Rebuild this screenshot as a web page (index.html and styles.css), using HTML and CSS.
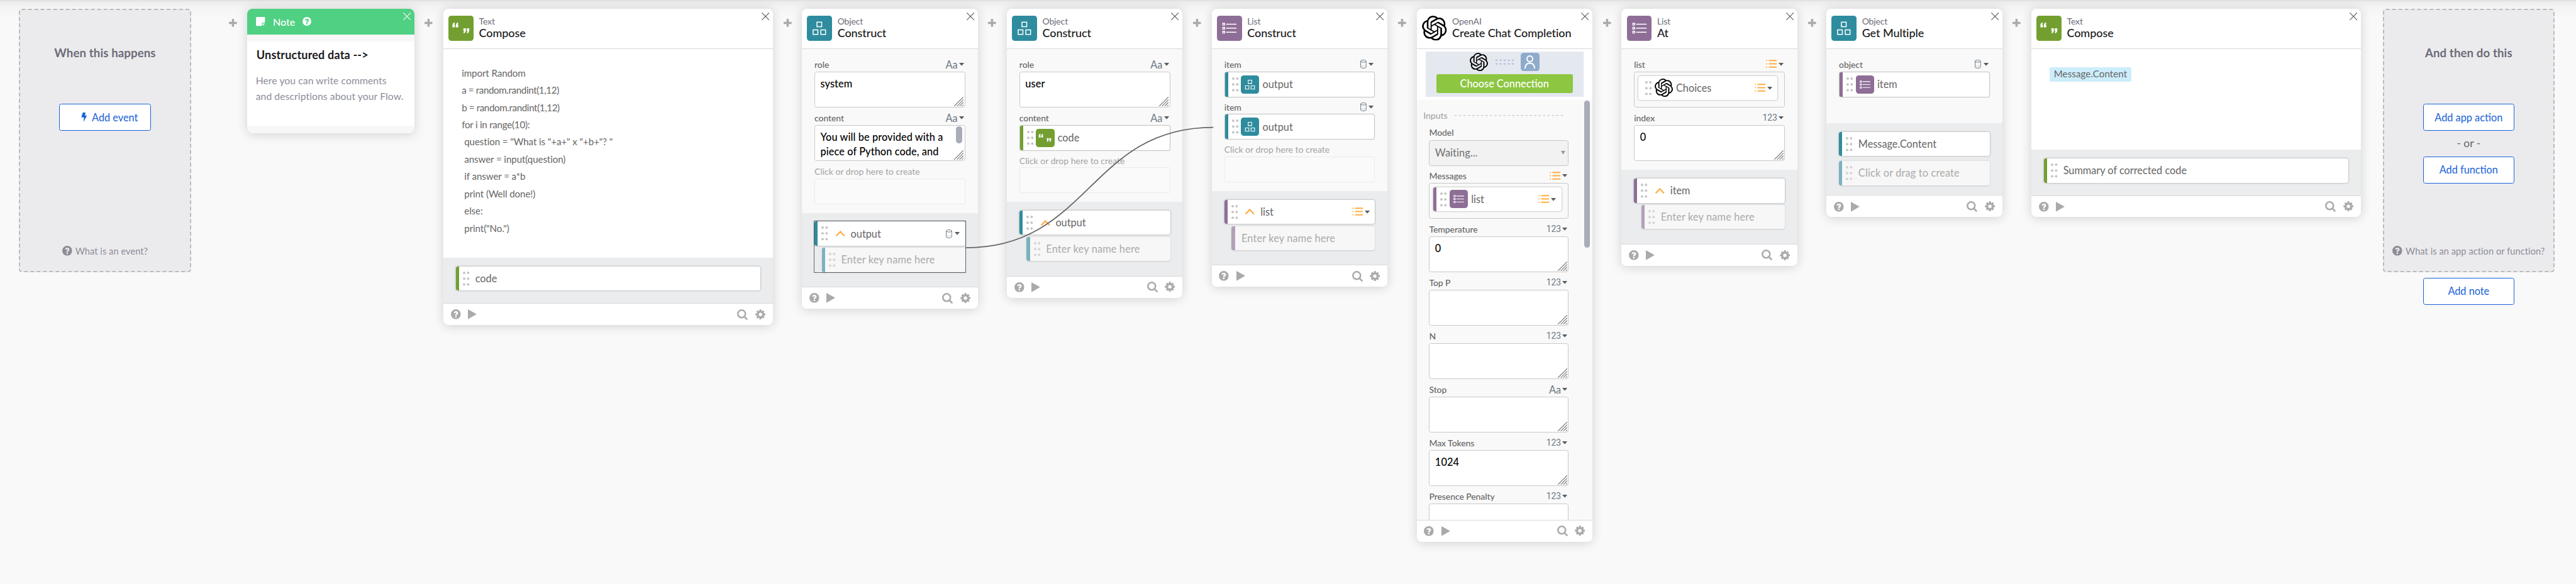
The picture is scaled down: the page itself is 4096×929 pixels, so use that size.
FILE: index.html
```html
<!DOCTYPE html>
<html lang="en">
<head>
<meta charset="utf-8">
<title>Flow editor</title>
<link rel="stylesheet" href="styles.css">
</head>
<body>
<svg class="defs" aria-hidden="true">
  <symbol id="plus" viewBox="0 0 22 22"><path d="M8 0h6v8h8v6h-8v8H8v-8H0V8h8z"/></symbol>
  <symbol id="close" viewBox="0 0 21 21"><path d="M.5.5l20 20M20.5.5l-20 20" fill="none" stroke="currentColor" stroke-width="1.8"/></symbol>
  <symbol id="help" viewBox="0 0 27 27"><path fill-rule="evenodd" d="M13.5 0a13.5 13.5 0 1 1 0 27a13.5 13.5 0 0 1 0-27zM11.4 18.5v4h4.2v-4zM7.5 9.2l3.6 1.8c.5-1.2 1.2-1.9 2.5-1.9 1.1 0 1.8.5 1.8 1.4 0 1.9-4 2.3-3.9 6.3h4c-.1-2.2 4.2-2.7 4.2-6.5 0-3-2.6-5.1-6-5.1-3 0-5.2 1.5-6.2 4z"/></symbol>
  <symbol id="play" viewBox="0 0 24 27"><path d="M0 0l24 13.5L0 27z"/></symbol>
  <symbol id="search" viewBox="0 0 29 29"><circle cx="12.5" cy="12.5" r="10.3" fill="none" stroke="currentColor" stroke-width="4.3"/><path d="M20 20l7 7" stroke="currentColor" stroke-width="4.6" stroke-linecap="round"/></symbol>
  <symbol id="gear" viewBox="-14 -14 28 28"><circle r="7.5" fill="none" stroke="currentColor" stroke-width="5.6"/><path d="M0-13.5v5M0 13.5v-5M-13.5 0h5M13.5 0h-5M-9.3-9.3L-6-6M9.3 9.3L6 6M-9.3 9.3L-6 6M9.3-9.3L6-6" stroke="currentColor" stroke-width="5.6"/></symbol>
  <symbol id="quotes" viewBox="0 0 68 68"><path d="M11 32v-6.5c0-2.5 2-5 3.7-6.8h3.300l-2.300 5.800h2V32zM20.300 32v-6.500c0-2.500 2-5 3.700-6.800h3.300L25 24.500h2V32zM57 34.500V41c0 2.500-2 5-3.700 6.800H50l2.300-5.800h-2v-7.500zM47.700 34.500V41c0 2.500-2 5-3.700 6.800h-3.300L43 42h-2v-7.500z"/></symbol>
  <symbol id="boxes" viewBox="0 0 68 68"><path d="M27.5 17.5h13V30h-13zM17 38.5h13V51H17zM38 38.5h13V51H38z" fill="none" stroke="currentColor" stroke-width="2.6"/></symbol>
  <symbol id="rows" viewBox="0 0 68 68"><path d="M16 20.500h5v5h-5zM16 31.500h5v5h-5zM16 42.500h5v5h-5z" fill="none" stroke="currentColor" stroke-width="2.4"/><path d="M25 23h28.500M25 34h28.500M25 45h28.500" stroke="currentColor" stroke-width="2.6"/></symbol>
  <symbol id="openai" viewBox="0 0 24 24"><path d="M22.2819 9.8211a5.9847 5.9847 0 0 0-.5157-4.9108 6.0462 6.0462 0 0 0-6.5098-2.9A6.0651 6.0651 0 0 0 4.9807 4.1818a5.9847 5.9847 0 0 0-3.9977 2.9 6.0462 6.0462 0 0 0 .7427 7.0966 5.98 5.98 0 0 0 .511 4.9107 6.051 6.051 0 0 0 6.5146 2.9001A5.9847 5.9847 0 0 0 13.2599 24a6.0557 6.0557 0 0 0 5.7718-4.2058 5.9894 5.9894 0 0 0 3.9977-2.9001 6.0557 6.0557 0 0 0-.7475-7.0729zm-9.022 12.6081a4.4755 4.4755 0 0 1-2.8764-1.0408l.1419-.0804 4.7783-2.7582a.7948.7948 0 0 0 .3927-.6813v-6.7369l2.02 1.1686a.071.071 0 0 1 .038.052v5.5826a4.504 4.504 0 0 1-4.4945 4.4944zm-9.6607-4.1254a4.4708 4.4708 0 0 1-.5346-3.0137l.142.0852 4.783 2.7582a.7712.7712 0 0 0 .7806 0l5.8428-3.3685v2.3324a.0804.0804 0 0 1-.0332.0615L9.74 19.9502a4.4992 4.4992 0 0 1-6.1408-1.6464zM2.3408 7.8956a4.485 4.485 0 0 1 2.3655-1.9728V11.6a.7664.7664 0 0 0 .3879.6765l5.8144 3.3543-2.0201 1.1685a.0757.0757 0 0 1-.071 0l-4.8303-2.7865A4.504 4.504 0 0 1 2.3408 7.872zm16.5963 3.8558L13.1038 8.364 15.1192 7.2a.0757.0757 0 0 1 .071 0l4.8303 2.7913a4.4944 4.4944 0 0 1-.6765 8.1042v-5.6772a.79.79 0 0 0-.407-.667zm2.0107-3.0231l-.142-.0852-4.7735-2.7818a.7759.7759 0 0 0-.7854 0L9.409 9.2297V6.8974a.0662.0662 0 0 1 .0284-.0615l4.8303-2.7866a4.4992 4.4992 0 0 1 6.6802 4.66zM8.3065 12.863l-2.02-1.1638a.0804.0804 0 0 1-.038-.0567V6.0742a4.4992 4.4992 0 0 1 7.3757-3.4537l-.142.0805L8.704 5.459a.7948.7948 0 0 0-.3927.6813zm1.0976-2.3654l2.602-1.4998 2.6069 1.4998v2.9994l-2.5974 1.4997-2.6067-1.4997Z"/></symbol>
  <symbol id="user" viewBox="0 0 50 50"><g fill="none" stroke="currentColor" stroke-width="3.4"><circle cx="25" cy="16.5" r="7.8"/><path d="M12 43c.5-9.500 5.500-14.500 13-14.500S37.500 33.500 38 43"/></g></symbol>
  <symbol id="dots" viewBox="0 0 18 39"><circle cx="3.4" cy="3.4" r="3.4"/><circle cx="14.4" cy="3.4" r="3.4"/><circle cx="3.4" cy="19.4" r="3.4"/><circle cx="14.4" cy="19.4" r="3.4"/><circle cx="3.4" cy="35.4" r="3.4"/><circle cx="14.4" cy="35.4" r="3.4"/></symbol>
  <symbol id="chevron" viewBox="0 0 25 16"><path d="M1 14.500L12.500 2.500 24 14.500" fill="none" stroke="currentColor" stroke-width="3.8"/></symbol>
  <symbol id="caret" viewBox="0 0 14 8"><path d="M0 0h14L7 8z"/></symbol>
  <symbol id="lines" viewBox="0 0 30 23"><path d="M9 2.200h19.500M9 11.300h19.500M9 20.400h19.500M2 2.200h.1M2 11.300h.1M2 20.400h.1" fill="none" stroke="currentColor" stroke-width="3.4" stroke-linecap="round"/></symbol>
  <symbol id="db" viewBox="0 0 17 24"><path d="M1 4v16M16 4v16M1 4c0-4 15-4 15 0s-15 4-15 0M1 20c0 4 15 4 15 0" fill="none" stroke="currentColor" stroke-width="1.7"/><path d="M2 19c1-2.500 12-2.500 13 0" fill="none" stroke="currentColor" stroke-width="1" stroke-dasharray="2 1.5"/></symbol>
  <symbol id="grip" viewBox="0 0 26 26"><path d="M.5 25.500l25-25M8 25.500L25.500 8M15 25.500L25.500 15M22 25.500l3.500-3.500" stroke="currentColor" stroke-width="2"/></symbol>
  <symbol id="bolt" viewBox="0 0 16 26"><path d="M4.500 0H12l-1.500 8H16L6.500 26l1.300-12.500H.5z"/></symbol>
  <symbol id="note" viewBox="0 0 25 25"><path d="M2 0h21a2 2 0 0 1 2 2v13.500h-8.500V25H2a2 2 0 0 1-2-2V2a2 2 0 0 1 2-2zM18.500 24.500v-7h6.500z"/></symbol>
</svg>

<main class="flow">
  <section class="drop drop-first">
    <h2 class="drop-title">When this happens</h2>
    <button class="btn"><svg class="i-bolt"><use href="#bolt"/></svg>Add event</button>
    <p class="drop-help"><svg class="i-help"><use href="#help"/></svg>What is an event?</p>
  </section>

  <div class="gap"><svg class="i-plus"><use href="#plus"/></svg></div>
  <article class="note">
    <header class="note-head"><svg class="i-note"><use href="#note"/></svg><span class="note-label">Note</span><svg class="i-nhelp"><use href="#help"/></svg><svg class="close"><use href="#close"/></svg></header>
    <div class="note-body">
      <h3 class="note-title">Unstructured data --&gt;</h3>
      <p class="note-text">Here you can write comments<br>and descriptions about your Flow.</p>
    </div>
  </article>

  <div class="gap"><svg class="i-plus"><use href="#plus"/></svg></div>
  <article class="card wide green">
    <header class="head"><span class="tile"><svg><use href="#quotes"/></svg></span><div class="names"><span class="kind">Text</span><span class="name">Compose</span></div><svg class="close"><use href="#close"/></svg></header>
    <div class="doc tall">
      <p>import Random</p><p class="tight">a = random.randint(1,12)</p><p class="tight">b = random.randint(1,12)</p><p class="snug">for i in range(10):</p><p class="in">question = "What is "+a+" x "+b+"? "</p><p class="in">answer = input(question)</p><p class="in">if answer = a*b</p><p class="in">print (Well done!)</p><p class="in">else:</p><p class="in">print("No.")</p>
    </div>
    <div class="outs"><div class="pill"><svg class="i-dots"><use href="#dots"/></svg><span class="val">code</span></div></div>
    <footer class="foot"><svg class="i-help"><use href="#help"/></svg><svg class="i-play"><use href="#play"/></svg><svg class="i-search"><use href="#search"/></svg><svg class="i-gear"><use href="#gear"/></svg></footer>
  </article>

  <div class="gap"><svg class="i-plus"><use href="#plus"/></svg></div>
  <article class="card teal">
    <header class="head"><span class="tile"><svg><use href="#boxes"/></svg></span><div class="names"><span class="kind">Object</span><span class="name">Construct</span></div><svg class="close"><use href="#close"/></svg></header>
    <div class="ins">
      <div class="label">role<span class="type">Aa<svg class="i-caret"><use href="#caret"/></svg></span></div>
      <div class="area">system<svg class="i-grip"><use href="#grip"/></svg></div>
      <div class="label">content<span class="type">Aa<svg class="i-caret"><use href="#caret"/></svg></span></div>
      <div class="area">You will be provided with a<br>piece of Python code, and<span class="thumb"></span><svg class="i-grip"><use href="#grip"/></svg></div>
      <div class="label faint">Click or drop here to create</div>
      <div class="empty"></div>
    </div>
    <div class="outs">
      <div class="group picked">
        <div class="pill"><svg class="i-dots"><use href="#dots"/></svg><svg class="i-chev"><use href="#chevron"/></svg><span class="val">output</span><span class="type end"><svg class="i-db"><use href="#db"/></svg><svg class="i-caret"><use href="#caret"/></svg></span></div>
        <div class="pill sub"><svg class="i-dots"><use href="#dots"/></svg><span class="val">Enter key name here</span></div>
      </div>
    </div>
    <footer class="foot"><svg class="i-help"><use href="#help"/></svg><svg class="i-play"><use href="#play"/></svg><svg class="i-search"><use href="#search"/></svg><svg class="i-gear"><use href="#gear"/></svg></footer>
  </article>

  <div class="gap"><svg class="i-plus"><use href="#plus"/></svg></div>
  <article class="card teal">
    <header class="head"><span class="tile"><svg><use href="#boxes"/></svg></span><div class="names"><span class="kind">Object</span><span class="name">Construct</span></div><svg class="close"><use href="#close"/></svg></header>
    <div class="ins">
      <div class="label">role<span class="type">Aa<svg class="i-caret"><use href="#caret"/></svg></span></div>
      <div class="area">user<svg class="i-grip"><use href="#grip"/></svg></div>
      <div class="label">content<span class="type">Aa<svg class="i-caret"><use href="#caret"/></svg></span></div>
      <div class="slot green"><svg class="i-dots"><use href="#dots"/></svg><span class="tile small"><svg><use href="#quotes"/></svg></span><span class="val">code</span></div>
      <div class="label faint short">Click or drop here to create</div>
      <div class="empty"></div>
    </div>
    <div class="outs">
      <div class="group">
        <div class="pill"><svg class="i-dots"><use href="#dots"/></svg><svg class="i-chev"><use href="#chevron"/></svg><span class="val">output</span></div>
        <div class="pill sub"><svg class="i-dots"><use href="#dots"/></svg><span class="val">Enter key name here</span></div>
      </div>
    </div>
    <footer class="foot"><svg class="i-help"><use href="#help"/></svg><svg class="i-play"><use href="#play"/></svg><svg class="i-search"><use href="#search"/></svg><svg class="i-gear"><use href="#gear"/></svg></footer>
  </article>

  <div class="gap"><svg class="i-plus"><use href="#plus"/></svg></div>
  <article class="card purple">
    <header class="head"><span class="tile"><svg><use href="#rows"/></svg></span><div class="names"><span class="kind">List</span><span class="name">Construct</span></div><svg class="close"><use href="#close"/></svg></header>
    <div class="ins">
      <div class="label">item<span class="type"><svg class="i-db"><use href="#db"/></svg><svg class="i-caret"><use href="#caret"/></svg></span></div>
      <div class="slot teal"><svg class="i-dots"><use href="#dots"/></svg><span class="tile small"><svg><use href="#boxes"/></svg></span><span class="val">output</span></div>
      <div class="label short">item<span class="type"><svg class="i-db"><use href="#db"/></svg><svg class="i-caret"><use href="#caret"/></svg></span></div>
      <div class="slot teal"><svg class="i-dots"><use href="#dots"/></svg><span class="tile small"><svg><use href="#boxes"/></svg></span><span class="val">output</span></div>
      <div class="label faint short">Click or drop here to create</div>
      <div class="empty"></div>
    </div>
    <div class="outs">
      <div class="group">
        <div class="pill"><svg class="i-dots"><use href="#dots"/></svg><svg class="i-chev"><use href="#chevron"/></svg><span class="val">list</span><span class="type end"><svg class="i-lines"><use href="#lines"/></svg><svg class="i-caret"><use href="#caret"/></svg></span></div>
        <div class="pill sub bare"><span class="val">Enter key name here</span></div>
      </div>
    </div>
    <footer class="foot"><svg class="i-help"><use href="#help"/></svg><svg class="i-play"><use href="#play"/></svg><svg class="i-search"><use href="#search"/></svg><svg class="i-gear"><use href="#gear"/></svg></footer>
  </article>

  <div class="gap"><svg class="i-plus"><use href="#plus"/></svg></div>
  <article class="card purple">
    <header class="head"><span class="tile brand"><svg><use href="#openai"/></svg></span><div class="names"><span class="kind">OpenAI</span><span class="name">Create Chat Completion</span></div><svg class="close"><use href="#close"/></svg></header>
    <div class="connect">
      <div class="connect-row"><svg class="i-logo"><use href="#openai"/></svg><svg class="i-link" viewBox="0 0 50 13"><path d="M0 1.500h50M0 11.500h50" stroke="currentColor" stroke-width="2" stroke-dasharray="5.5 5.6"/></svg><span class="person"><svg><use href="#user"/></svg></span></div>
      <button class="choose">Choose Connection</button>
    </div>
    <div class="scroll">
      <div class="thumb long"></div>
      <div class="legend">Inputs<svg class="i-rule" viewBox="0 0 296 2" preserveAspectRatio="none"><path d="M0 1h296" stroke="currentColor" stroke-width="2" stroke-dasharray="6 6.08"/></svg></div>
      <div class="label model">Model</div>
      <div class="select">Waiting...<svg class="i-arrow" viewBox="0 0 12 10"><path d="M0 0h12L6 10z"/></svg></div>
      <div class="label short">Messages<span class="type"><svg class="i-lines"><use href="#lines"/></svg><svg class="i-caret"><use href="#caret"/></svg></span></div>
      <div class="nest"><div class="pill"><svg class="i-dots"><use href="#dots"/></svg><span class="tile small"><svg><use href="#rows"/></svg></span><span class="val">list</span><span class="type end"><svg class="i-lines"><use href="#lines"/></svg><svg class="i-caret"><use href="#caret"/></svg></span></div></div>
      <div class="label">Temperature<span class="type num">123<svg class="i-caret"><use href="#caret"/></svg></span></div>
      <div class="area">0<svg class="i-grip"><use href="#grip"/></svg></div>
      <div class="label">Top P<span class="type num">123<svg class="i-caret"><use href="#caret"/></svg></span></div>
      <div class="area"><svg class="i-grip"><use href="#grip"/></svg></div>
      <div class="label">N<span class="type num">123<svg class="i-caret"><use href="#caret"/></svg></span></div>
      <div class="area"><svg class="i-grip"><use href="#grip"/></svg></div>
      <div class="label">Stop<span class="type">Aa<svg class="i-caret"><use href="#caret"/></svg></span></div>
      <div class="area"><svg class="i-grip"><use href="#grip"/></svg></div>
      <div class="label">Max Tokens<span class="type num">123<svg class="i-caret"><use href="#caret"/></svg></span></div>
      <div class="area">1024<svg class="i-grip"><use href="#grip"/></svg></div>
      <div class="label">Presence Penalty<span class="type num">123<svg class="i-caret"><use href="#caret"/></svg></span></div>
      <div class="area"></div>
    </div>
    <footer class="foot"><svg class="i-help"><use href="#help"/></svg><svg class="i-play"><use href="#play"/></svg><svg class="i-search"><use href="#search"/></svg><svg class="i-gear"><use href="#gear"/></svg></footer>
  </article>

  <div class="gap"><svg class="i-plus"><use href="#plus"/></svg></div>
  <article class="card purple">
    <header class="head"><span class="tile"><svg><use href="#rows"/></svg></span><div class="names"><span class="kind">List</span><span class="name">At</span></div><svg class="close"><use href="#close"/></svg></header>
    <div class="ins">
      <div class="label">list<span class="type"><svg class="i-lines"><use href="#lines"/></svg><svg class="i-caret"><use href="#caret"/></svg></span></div>
      <div class="nest"><div class="pill plain"><svg class="i-dots"><use href="#dots"/></svg><span class="tile small brand"><svg><use href="#openai"/></svg></span><span class="val">Choices</span><span class="type end"><svg class="i-lines"><use href="#lines"/></svg><svg class="i-caret"><use href="#caret"/></svg></span></div></div>
      <div class="label">index<span class="type num">123<svg class="i-caret"><use href="#caret"/></svg></span></div>
      <div class="area">0<svg class="i-grip"><use href="#grip"/></svg></div>
    </div>
    <div class="outs">
      <div class="group">
        <div class="pill"><svg class="i-dots"><use href="#dots"/></svg><svg class="i-chev"><use href="#chevron"/></svg><span class="val">item</span></div>
        <div class="pill sub"><svg class="i-dots"><use href="#dots"/></svg><span class="val">Enter key name here</span></div>
      </div>
    </div>
    <footer class="foot"><svg class="i-help"><use href="#help"/></svg><svg class="i-play"><use href="#play"/></svg><svg class="i-search"><use href="#search"/></svg><svg class="i-gear"><use href="#gear"/></svg></footer>
  </article>

  <div class="gap"><svg class="i-plus"><use href="#plus"/></svg></div>
  <article class="card teal">
    <header class="head"><span class="tile"><svg><use href="#boxes"/></svg></span><div class="names"><span class="kind">Object</span><span class="name">Get Multiple</span></div><svg class="close"><use href="#close"/></svg></header>
    <div class="ins roomy">
      <div class="label">object<span class="type"><svg class="i-db"><use href="#db"/></svg><svg class="i-caret"><use href="#caret"/></svg></span></div>
      <div class="slot purple"><svg class="i-dots"><use href="#dots"/></svg><span class="tile small"><svg><use href="#rows"/></svg></span><span class="val">item</span></div>
    </div>
    <div class="outs spaced">
      <div class="pill"><svg class="i-dots"><use href="#dots"/></svg><span class="val">Message.Content</span></div>
      <div class="pill sub flush"><svg class="i-dots"><use href="#dots"/></svg><span class="val">Click or drag to create</span></div>
    </div>
    <footer class="foot"><svg class="i-help"><use href="#help"/></svg><svg class="i-play"><use href="#play"/></svg><svg class="i-search"><use href="#search"/></svg><svg class="i-gear"><use href="#gear"/></svg></footer>
  </article>

  <div class="gap"><svg class="i-plus"><use href="#plus"/></svg></div>
  <article class="card wide green">
    <header class="head"><span class="tile"><svg><use href="#quotes"/></svg></span><div class="names"><span class="kind">Text</span><span class="name">Compose</span></div><svg class="close"><use href="#close"/></svg></header>
    <div class="doc brief"><span class="token">Message.Content</span></div>
    <div class="outs"><div class="pill"><svg class="i-dots"><use href="#dots"/></svg><span class="val">Summary of corrected code</span></div></div>
    <footer class="foot"><svg class="i-help"><use href="#help"/></svg><svg class="i-play"><use href="#play"/></svg><svg class="i-search"><use href="#search"/></svg><svg class="i-gear"><use href="#gear"/></svg></footer>
  </article>

  <div class="last">
    <section class="drop">
      <h2 class="drop-title">And then do this</h2>
      <button class="btn">Add app action</button>
      <p class="or">- or -</p>
      <button class="btn">Add function</button>
      <p class="drop-help"><svg class="i-help"><use href="#help"/></svg>What is an app action or function?</p>
    </section>
    <button class="btn">Add note</button>
  </div>
</main>

<svg class="wire" viewBox="0 0 7040 1596"><path d="M2639 677C2977 677 2978 348 3316 348" fill="none" stroke="#666" stroke-width="3"/></svg>
</body>
</html>
```
FILE: styles.css
```css
/* The canvas is 70.4rem wide and scales with the window */
html { font-size: calc(100vw / 70.4); }
* { box-sizing: border-box; }
body {
  margin: 0;
  height: 100vh;
  overflow: hidden;
  font-family: Lato, "Open Sans", sans-serif;
  font-size: .28rem;
  color: #666;
  background: linear-gradient(#dedede, #ececec .05rem, #f4f4f4 .2rem, #f9f9f9 .5rem);
}
h2, h3, p { margin: 0; }
button { font: inherit; padding: 0; }
svg { display: block; flex: none; fill: currentColor; overflow: visible; }
.defs { position: absolute; width: 0; height: 0; overflow: hidden; }

.flow { display: flex; align-items: flex-start; padding: .238rem 0 0 .52rem; }
.gap { flex: none; width: .8rem; padding-top: .275rem; display: flex; justify-content: center; color: #aaa; }
.i-plus { width: .22rem; height: .22rem; }

/* Dashed drop zones at both ends */
.drop {
  flex: none;
  width: 4.7rem;
  height: 7.2rem;
  display: flex;
  flex-direction: column;
  align-items: center;
  padding-top: .98rem;
  border: .04rem dashed #bbb;
  border-radius: .08rem;
  background: #ebebed;
}
.drop-first { margin-right: .74rem; }
.drop-title { font-size: .32rem; line-height: .4rem; font-weight: 700; letter-spacing: .002rem; color: #6c6c78; margin-bottom: 1.19rem; }
.btn {
  flex: none;
  width: 2.5rem;
  height: .74rem;
  display: flex;
  align-items: center;
  justify-content: center;
  gap: .14rem;
  border: .025rem solid #1a62d9;
  border-radius: .06rem;
  background: #fff;
  color: #1a62d9;
  font-size: .28rem;
  padding-bottom: .02rem;
}
.i-bolt { width: .16rem; height: .26rem; margin-left: .24rem; }
.or { height: .69rem; line-height: .69rem; font-size: .3rem; }
.drop-help { display: flex; align-items: center; gap: .09rem; margin-top: auto; margin-bottom: .37rem; height: .34rem; font-size: .25rem; color: #8d8d99; letter-spacing: .0016rem; }
.last { display: flex; flex-direction: column; align-items: center; gap: .16rem; margin-left: .6rem; }

/* Note */
.note { flex: none; position: relative; width: 4.56rem; height: 3.4rem; border-radius: .14rem; overflow: hidden; background: #f7f7f7; box-shadow: 0 .02rem .3rem rgba(0, 0, 0, .16); }
.note-head { display: flex; align-items: center; height: .7rem; padding-left: .23rem; background: #4fd083; color: #fff; }
.note-head .close { color: #fff; }
.i-note { width: .25rem; height: .25rem; }
.note-label { margin: 0 .21rem 0 .22rem; font-size: .275rem; font-weight: 500; }
.i-nhelp { width: .24rem; height: .24rem; }
.note-body { margin-top: .2rem; height: 2.3rem; padding: .17rem .23rem; background: #fff; }
.note-title { font-size: .31rem; line-height: .4rem; color: #1a1a20; letter-spacing: .003rem; padding-left: .02rem; }
.note-text { margin-top: .28rem; font-size: .27rem; line-height: .44rem; color: #8d8d99; letter-spacing: .0015rem; white-space: nowrap; }

/* Cards */
.card { flex: none; position: relative; width: 4.8rem; border-radius: .14rem; overflow: hidden; background: #f9f9f9; box-shadow: 0 .02rem .3rem rgba(0, 0, 0, .16); }
.wide { width: 9rem; }
.green { --tone: #739f31; --tone-soft: #a9c281; }
.teal { --tone: #2e8c9e; --tone-soft: #7ab2bf; }
.purple { --tone: #8e6e96; --tone-soft: #b3a0b9; }

.head { display: flex; height: 1.1rem; padding: .2rem .14rem 0; background: #fff; border-bottom: .02rem solid #d9d9dd; }
.tile { flex: none; width: .68rem; height: .68rem; border-radius: .08rem; background: var(--tone); color: #fff; }
.tile svg { width: 100%; height: 100%; }
.brand { background: none; color: #000; }
.names { display: flex; flex-direction: column; margin-left: .15rem; white-space: nowrap; }
.kind { font-size: .24rem; line-height: .3rem; color: #6c6c78; letter-spacing: -.002rem; }
.name { font-size: .31rem; line-height: .34rem; color: #1a1a20; font-weight: 500; letter-spacing: -.0015rem; }
.close { position: absolute; top: .1rem; right: .1rem; width: .21rem; height: .21rem; color: #555; }

.doc { background: #fff; color: #666; font-size: .26rem; line-height: .471rem; padding: .43rem .5rem 0; letter-spacing: -.0015rem; white-space: nowrap; }
.tall { height: 5.71rem; }
.brief { height: 2.76rem; padding-top: .5rem; }
.doc .in { padding-left: .07rem; }
.tight { letter-spacing: -.0062rem; }
.snug { letter-spacing: -.004rem; }
.token { display: block; width: 2.23rem; height: .39rem; line-height: .37rem; text-align: center; border-radius: .04rem; background: #ccedfb; letter-spacing: .0015rem; }

.ins { padding: .145rem .34rem .24rem; }
.roomy { padding-bottom: .71rem; }
.label { display: flex; justify-content: space-between; align-items: center; height: .474rem; padding: .07rem .03rem 0 0; font-size: .24rem; font-weight: 500; letter-spacing: -.001rem; }
.short { height: .462rem; }
.faint { color: #a3a3a3; font-weight: 400; letter-spacing: .0005rem; }
.type { display: flex; align-items: center; gap: .04rem; font-size: .28rem; font-weight: 400; color: #6a7783; }
.num { font-family: Roboto, sans-serif; font-size: .24rem; letter-spacing: -.0015rem; }
.type .i-caret { color: #5c5c5c; }
.i-caret { width: .14rem; height: .08rem; }
.i-db { width: .17rem; height: .24rem; margin-right: .03rem; }
.i-lines { width: .3rem; height: .23rem; color: #ffad42; }

.area { position: relative; height: .987rem; padding: .12rem .145rem; border: .025rem solid #c8c8c8; border-radius: .06rem; background: #fff; color: #000; font-size: .28rem; line-height: .39rem; font-weight: 500; letter-spacing: .0018rem; white-space: nowrap; }
.i-grip { position: absolute; right: .02rem; bottom: .02rem; width: .26rem; height: .26rem; color: #777; }
.thumb { position: absolute; top: .02rem; right: .07rem; width: .16rem; height: .47rem; border-radius: .08rem; background: #a9adb7; }
.empty { height: .7rem; border: .02rem solid #ebebeb; border-radius: .05rem; background: #fafafa; }

/* Value holders: slot is an input, pill an output */
.slot, .pill { position: relative; display: flex; align-items: center; background: #fff; border-radius: .06rem; overflow: hidden; }
.slot { height: .7rem; padding-left: .19rem; border: .025rem solid #c4c4c4; box-shadow: 0 0 .02rem rgba(0, 0, 0, .15); }
.pill { height: .66rem; padding-left: .19rem; box-shadow: 0 0 .045rem rgba(0, 0, 0, .4); }
.slot::before, .pill::before { content: ""; position: absolute; left: 0; top: 0; bottom: 0; width: .09rem; background: var(--tone); }
.plain::before { display: none; }
.i-dots { width: .18rem; height: .39rem; color: #c4c4c4; }
.i-dots + .tile { margin-left: .07rem; }
.val { margin-left: .16rem; padding-bottom: .02rem; font-size: .28rem; white-space: nowrap; }
.tile + .val { margin-left: .09rem; }
.small { width: .5rem; height: .5rem; }
.i-chev { width: .25rem; height: .16rem; margin-left: .21rem; color: #ffad42; }
.end { margin-left: auto; margin-right: .145rem; }
.outs { padding: .24rem .34rem .34rem; background: #ebecee; }
.spaced { display: grid; gap: .14rem; padding-bottom: .27rem; }
.group { display: grid; gap: .06rem; padding-bottom: .06rem; }
.picked { outline: .022rem solid #666; padding-bottom: .005rem; margin-bottom: .055rem; }
.sub { margin-left: .2rem; background: #f7f7f7; box-shadow: 0 .01rem .04rem rgba(0, 0, 0, .14); color: #aaa; letter-spacing: .003rem; }
.sub::before { background: var(--tone-soft); }
.sub .i-dots { color: #d4d4d4; }
.flush { margin-left: 0; }
.bare { padding-left: .11rem; }

.foot { position: relative; display: flex; align-items: center; height: .6rem; padding: 0 .2rem; background: #fff; border-top: .02rem solid #d9d9dd; color: #aaa; }
.i-help { width: .27rem; height: .27rem; }
.i-play { width: .24rem; height: .27rem; margin-left: .2rem; }
.i-search { width: .29rem; height: .29rem; margin-left: auto; }
.i-gear { width: .28rem; height: .28rem; margin-left: .2rem; }

/* OpenAI card */
.connect { height: 1.395rem; padding: .08rem .24rem 0; background: linear-gradient(#e4e8ef, #e4e8ef) center .08rem / 4.32rem 1.24rem no-repeat #fff; }
.connect-row { display: flex; align-items: center; justify-content: center; gap: .2rem; height: .55rem; }
.i-logo { width: .5rem; height: .5rem; color: #000; }
.i-link { width: .5rem; height: .13rem; color: #8fa8d0; }
.person { width: .5rem; height: .5rem; border-radius: .08rem; background: #8fabcc; color: #fff; }
.person svg { width: 100%; height: 100%; }
.choose { display: block; width: 3.72rem; height: .52rem; margin: .06rem auto 0; border: 0; border-radius: .05rem; background: #8dc641; color: #fff; font-size: .28rem; line-height: .48rem; font-weight: 500; }
.scroll { position: relative; height: 11.475rem; padding: .255rem .65rem 0 .34rem; overflow: hidden; }
.long { top: .025rem; right: .06rem; height: 4.02rem; }
.legend { display: flex; align-items: center; gap: .2rem; height: .34rem; margin-left: -.16rem; font-size: .24rem; font-weight: 500; color: #a3a3a3; }
.i-rule { width: 2.96rem; height: .02rem; color: #c8c8c8; }
.model { height: .51rem; }
.select { display: flex; align-items: center; justify-content: space-between; height: .7rem; padding: 0 .07rem .03rem .145rem; border: .02rem solid #c8c8c8; border-radius: .06rem; background: #f2f2f2; color: #777; font-size: .28rem; font-weight: 500; letter-spacing: .001rem; }
.i-arrow { width: .12rem; height: .1rem; color: #999; }
.nest { height: .987rem; padding: .1rem .18rem 0 .1rem; border: .02rem solid #c8c8c8; border-radius: .06rem; }

.wire { position: absolute; inset: 0; width: 100%; height: 100%; pointer-events: none; }
```
